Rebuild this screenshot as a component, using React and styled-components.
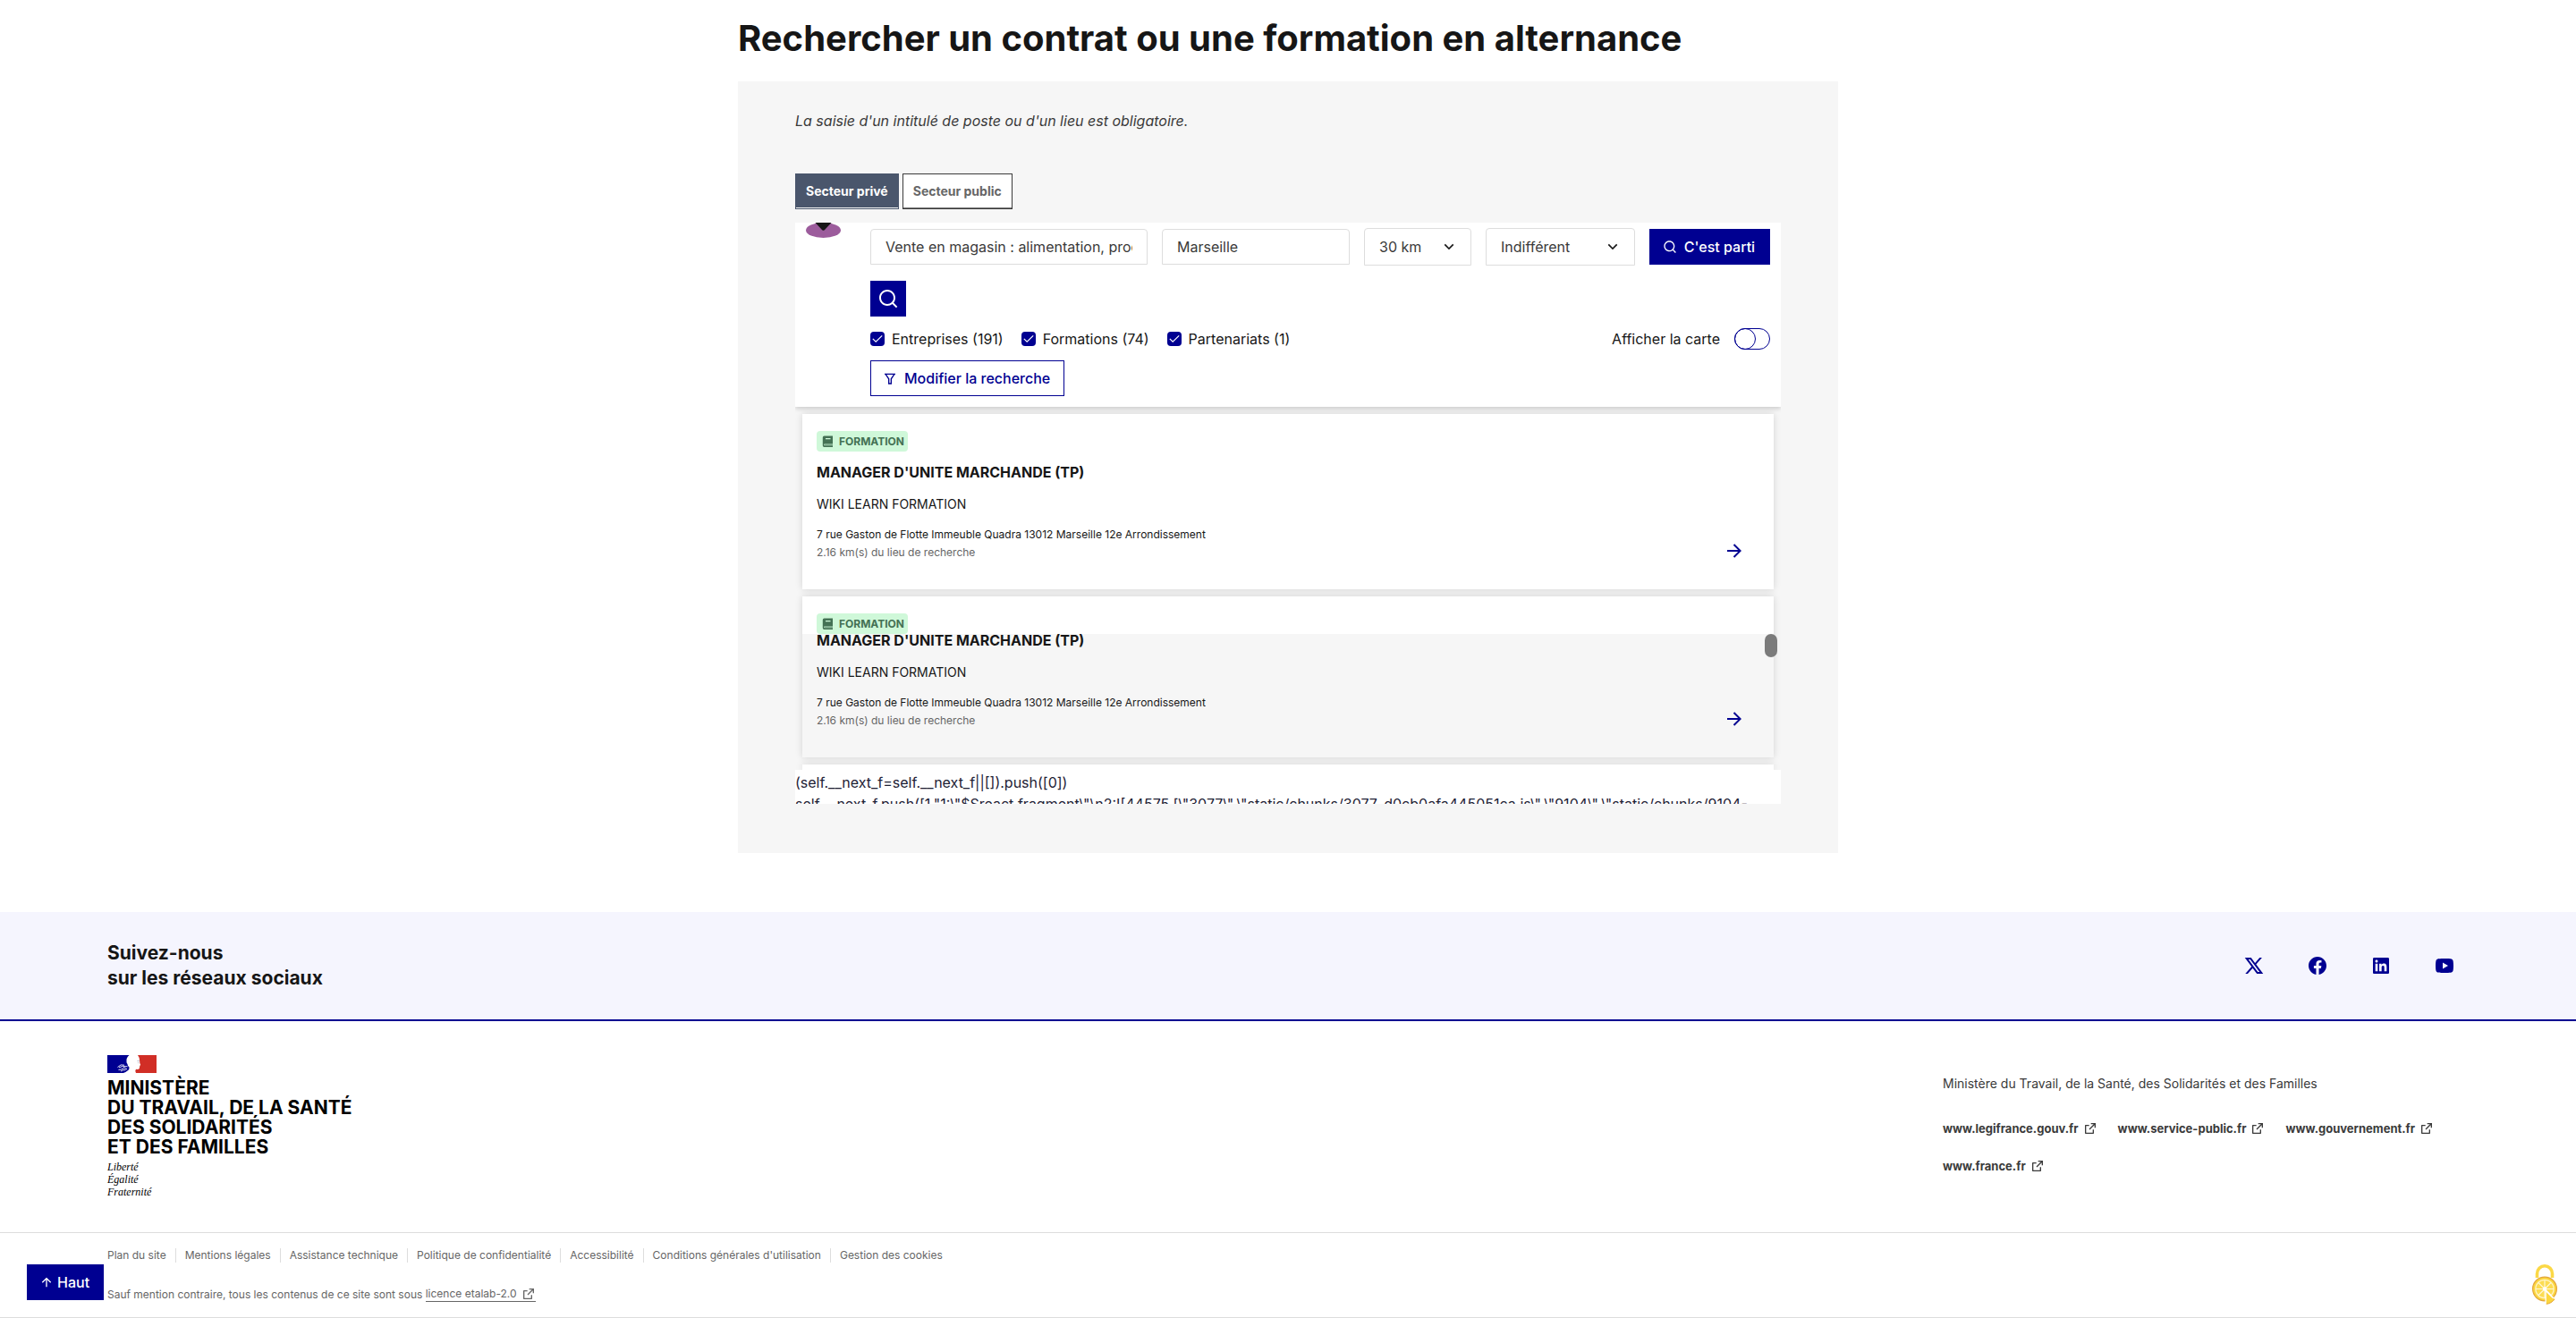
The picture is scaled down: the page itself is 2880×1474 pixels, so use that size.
import React from "react";
import styled, { createGlobalStyle, css } from "styled-components";
import {
  RiArrowDownSLine,
  RiArrowRightLine,
  RiArrowUpLine,
  RiExternalLinkLine,
  RiFacebookCircleFill,
  RiFilterLine,
  RiLinkedinBoxFill,
  RiSearchLine,
  RiTwitterXLine,
  RiYoutubeFill,
} from "react-icons/ri";

const color = {
  blue: "#000091",
  text: "#161616",
  body: "#3a3a3a",
  mention: "#666666",
  grey: "#f6f6f6",
  line: "#dddddd",
};

const GlobalStyle = createGlobalStyle`
  *, *::before, *::after { box-sizing: border-box; }
  body {
    margin: 0;
    background: #fff;
    color: ${color.text};
    font-family: Inter, "Open Sans", "Liberation Sans", sans-serif;
    font-size: 16px;
    line-height: 24px;
  }
  button, input, select { font: inherit; margin: 0; }
  h1, h2, h3, p, ul { margin: 0; padding: 0; }
  ul { list-style: none; }
  a { color: inherit; text-decoration: none; }
  svg { display: block; flex-shrink: 0; }
`;

/* ---------- search section ---------- */

const Main = styled.main`
  width: 100%;
  max-width: 1230px;
  margin: 0 auto 66px;
  padding-top: 19px;
`;

const Title = styled.h1`
  margin-bottom: 24px;
  font-size: 40px;
  line-height: 48px;
  font-weight: 700;
`;

const Panel = styled.section`
  padding: 32px 64px 55px;
  background: ${color.grey};
`;

const Hint = styled.p`
  font-style: italic;
  color: ${color.body};
`;

const Tabs = styled.div`
  display: flex;
  gap: 4px;
  margin: 47px 0 15px;
`;

const Tab = styled.button`
  height: 40px;
  padding: 0 11px;
  border: 1px solid ${(p) => (p.$active ? "#4a566c" : color.body)};
  background: ${(p) => (p.$active ? "#4a566c" : "#fff")};
  box-shadow: inset 0 -1px 0 ${(p) => (p.$active ? "#f6f6f6" : "#777")};
  color: ${(p) => (p.$active ? "#fff" : color.mention)};
  font-size: 14px;
  font-weight: 700;
`;

const Frame = styled.div`
  position: relative;
  overflow: hidden;
`;

const SearchHeader = styled.div`
  position: relative;
  z-index: 1;
  display: grid;
  grid-template-columns: 72px minmax(0, 1fr);
  padding: 0 12px 12px;
  background: #fff;
  box-shadow: 0 2px 5px rgba(0, 0, 0, 0.18);
`;

const HeaderContent = styled.div`
  display: flex;
  flex-direction: column;
  align-items: flex-start;
  padding-top: 6px;
`;

const Fields = styled.form`
  display: grid;
  grid-template-columns: 310fr 210fr 120fr 167fr 135px;
  gap: 16px;
  align-items: center;
  width: 100%;
  margin-bottom: 17px;
`;

const field = css`
  width: 100%;
  min-width: 0;
  border: 1px solid ${color.line};
  border-radius: 4px 4px 0 0;
  background: #fff;
  color: ${color.body};
  padding: 0 16px;
  outline: none;
`;

const TextInput = styled.input`
  ${field}
  height: 40px;
`;

const SelectBox = styled.div`
  position: relative;
  svg {
    position: absolute;
    top: 11px;
    right: 15px;
    pointer-events: none;
  }
`;

const Select = styled.select`
  ${field}
  height: 42px;
  appearance: none;
`;

const Button = styled.button`
  display: inline-flex;
  align-items: center;
  justify-content: center;
  gap: ${(p) => p.$gap || 8}px;
  height: 40px;
  padding: 0 15px 0 13px;
  border: 1px solid ${color.blue};
  background: ${(p) => (p.$outline ? "#fff" : color.blue)};
  color: ${(p) => (p.$outline ? color.blue : "#fff")};
  font-weight: 500;
  white-space: nowrap;
`;

const SquareButton = styled(Button)`
  width: 40px;
  padding: 0;
`;

const Filters = styled.div`
  display: flex;
  align-items: center;
  gap: 20px;
  width: 100%;
  margin: 13px 0 12px;
`;

const CheckLabel = styled.label`
  display: flex;
  align-items: center;
  gap: 8px;
`;

const CheckBox = styled.span`
  display: grid;
  width: 16px;
  height: 16px;
  > * { grid-area: 1 / 1; }
  svg { pointer-events: none; }
`;

const CheckInput = styled.input`
  appearance: none;
  width: 16px;
  height: 16px;
  border-radius: 4px;
  background: ${color.blue};
`;

const ToggleLabel = styled.label`
  display: flex;
  align-items: center;
  gap: 16px;
  margin-left: auto;
`;

const ToggleInput = styled.input`
  appearance: none;
  width: 40px;
  height: 24px;
  border: 1px solid ${color.blue};
  border-radius: 12px;
  background: #fff;
  &::before {
    content: "";
    display: block;
    width: 24px;
    height: 24px;
    margin: -1px;
    border: 1px solid ${color.blue};
    border-radius: 12px;
  }
`;

const Results = styled.div`
  display: flex;
  flex-direction: column;
  gap: 8px;
  padding: 8px 8px 0;
  overflow: hidden;
`;

const Card = styled.article`
  display: flex;
  align-items: flex-end;
  justify-content: space-between;
  padding: 19px 32px 31px 16px;
  background: ${(p) =>
    p.$split ? `linear-gradient(#fff 42px, ${color.grey} 42px)` : "#fff"};
  box-shadow: 0 0 8px rgba(0, 0, 0, 0.14);
  color: ${color.text};
  > svg { color: ${color.blue}; }
`;

const NextCard = styled.div`
  height: 6px;
  background: #fff;
  box-shadow: 0 0 8px rgba(0, 0, 0, 0.14);
`;

const Badge = styled.p`
  display: flex;
  align-items: center;
  gap: 5px;
  width: fit-content;
  height: 23px;
  padding: 0 4px 0 6px;
  border-radius: 4px;
  background: #cff8d9;
  color: #447154;
  font-size: 12px;
  font-weight: 700;
`;

const CardTitle = styled.h3`
  margin-top: ${(p) => (p.$split ? -5 : 11)}px;
  font-size: 16px;
  line-height: 24px;
  font-weight: 700;
`;

const Company = styled.p`
  margin: 12px 0;
  font-size: 14px;
`;

const Small = styled.p`
  font-size: 12px;
  line-height: 20px;
  color: ${(p) => (p.$muted ? color.mention : color.text)};
`;

const Thumb = styled.div`
  position: absolute;
  z-index: 2;
  top: 460px;
  right: 4px;
  width: 14px;
  height: 26px;
  border-radius: 7px;
  background: #7b7b7b;
`;

const ScriptText = styled.div`
  height: 38px;
  padding-top: 2px;
  overflow: hidden;
  background: #fff;
  color: #1e2235;
  white-space: pre;
`;

/* ---------- footer ---------- */

const Follow = styled.section`
  display: flex;
  align-items: center;
  justify-content: space-between;
  height: 122px;
  padding: 0 120px;
  border-bottom: 2px solid ${color.blue};
  background: #f5f5fe;
`;

const FollowTitle = styled.h2`
  font-size: 21px;
  line-height: 28px;
  font-weight: 700;
`;

const Social = styled.ul`
  display: flex;
  gap: 16px;
  color: ${color.blue};
  a {
    display: grid;
    place-items: center;
    width: 55px;
    height: 56px;
  }
`;

const FooterBody = styled.div`
  display: flex;
  justify-content: space-between;
  padding: 38px 120px;
`;

const Ministry = styled.p`
  margin: 6px 0 4px;
  color: #000;
  font-size: 21px;
  line-height: 22px;
  font-weight: 700;
`;

const Motto = styled.p`
  color: #000;
  font: italic 12px/14px "Liberation Serif", serif;
`;

const FooterAside = styled.div`
  width: 588px;
  padding-top: 20px;
  color: ${color.body};
  font-size: 14px;
`;

const SiteLinks = styled.ul`
  display: flex;
  flex-wrap: wrap;
  gap: 18px 23px;
  margin-top: 26px;
  font-size: 13px;
  font-weight: 700;
  a {
    display: flex;
    align-items: center;
    gap: 5px;
  }
`;

const FooterBottom = styled.div`
  padding: 15px 120px;
  border: solid ${color.line};
  border-width: 1px 0;
  color: ${color.mention};
  font-size: 12px;
  line-height: 20px;
`;

const LegalLinks = styled.ul`
  display: flex;
  align-items: center;
  margin-bottom: 24px;
  li {
    display: flex;
    align-items: center;
  }
  li + li::before {
    content: "";
    width: 1px;
    height: 16px;
    margin: 0 10px;
    background: ${color.line};
  }
`;

const Licence = styled.a`
  display: inline-flex;
  align-items: center;
  gap: 5px;
  height: 18px;
  border-bottom: 1px solid ${color.mention};
  vertical-align: top;
`;

const TopButton = styled(Button)`
  position: fixed;
  left: 30px;
  bottom: 20px;
`;

const CookieButton = styled.button`
  position: fixed;
  right: 21px;
  bottom: 15px;
  padding: 0;
  border: 0;
  background: none;
`;

/* ---------- drawings ---------- */

const PinBase = () => (
  <svg width="40" height="17" viewBox="0 0 40 17" aria-hidden="true">
    <ellipse cx="19.5" cy="8.5" rx="19.5" ry="8.5" fill="#9c5c9c" />
    <path d="M10.500 0H28.500L21.500 7.500Q19.500 10 17.500 7.500Z" fill="#161616" />
  </svg>
);

const BookIcon = () => (
  <svg width="14" height="14" viewBox="0 0 14 14" aria-hidden="true">
    <path
      fill="currentColor"
      fillRule="evenodd"
      d="M2.500 .5H12V9.500H2.800Q2 9.500 2 10.300T2.800 11.200H12V13H2.500Q.8 13 .8 11.300V2.200Q.8 .5 2.500 .5ZM4 3V4.200H9.500V3Z"
    />
    <path fill="currentColor" opacity=".55" d="M2.500 9.800H12V11H2.500Z" />
  </svg>
);

const CheckMark = () => (
  <svg width="16" height="16" viewBox="0 0 16 16" aria-hidden="true">
    <path d="M2.800 7.800 6.200 11.200 13.200 4.400" fill="none" stroke="#fff" strokeWidth="1.200" />
  </svg>
);

const Flag = () => (
  <svg width="55" height="20" viewBox="0 0 55 20" aria-hidden="true">
    <path fill="#000091" d="M0 0H24.500Q21 3 21.500 6.500Q21 8 22.500 10Q22.500 12 24.500 13.500Q25 16 22.500 17.500Q20.500 19 18 20H0Z" />
    <path fill="#d12e26" d="M34 0H55V20H32Q30.500 17.500 32 15.800Q35 16.200 35.800 15Q36 13.500 36.200 12.500Q36 11.800 37.200 11Q35.800 8.500 36.200 7Q36.500 3 34 0Z" />
    <path
      d="M11.500 13.500Q15 9.500 19 11.200M13 13.800Q17 11.500 22.500 12.800M12.500 16.500Q15.500 16.500 18.500 14.500M15 18Q18 16 20.500 16.500M18 13.500L22 15.800"
      fill="none"
      stroke="#fff"
      strokeWidth=".9"
    />
    <path d="M33.500 6.500H35.800M34 8.500L35 8.800" stroke="#9aa0b8" strokeWidth=".7" />
  </svg>
);

const CookieLock = () => (
  <svg width="28" height="45" viewBox="0 0 28 45" aria-hidden="true">
    <path d="M5.500 15V10.500A8.500 8.700 0 0 1 22.500 10.500V15" fill="none" stroke="#fbd846" strokeWidth="3.600" />
    <circle cx="14" cy="27.500" r="13.400" fill="#fbd63f" stroke="#e3a63c" strokeWidth="1.200" />
    <circle cx="14" cy="27.500" r="10.200" fill="#fcdc52" stroke="#fff3c4" strokeWidth="1.200" />
    <path
      d="M14 17.500V37.500M4 27.500H24M7 20.500L21 34.500M21 20.500L7 34.500"
      stroke="#fff7d6"
      strokeWidth="1.200"
    />
    <path d="M14.500 27.500V42.500H16L24.500 37.500Z" fill="#fff" />
    <path d="M15.800 31L22.500 37.800L25.500 38.800Q21.500 44 15.800 44.500Z" fill="#fbd63f" />
    <path d="M25 39Q21.500 43.800 15.800 44.300" fill="none" stroke="#e3a63c" strokeWidth="1" />
    <circle cx="14.200" cy="27.500" r="2.200" fill="#fff" />
  </svg>
);

/* ---------- page ---------- */

const filters = ["Entreprises (191)", "Formations (74)", "Partenariats (1)"];

const socials = [
  ["Twitter", RiTwitterXLine],
  ["Facebook", RiFacebookCircleFill],
  ["LinkedIn", RiLinkedinBoxFill],
  ["YouTube", RiYoutubeFill],
];

const sites = [
  "www.legifrance.gouv.fr",
  "www.service-public.fr",
  "www.gouvernement.fr",
  "www.france.fr",
];

const legal = [
  "Plan du site",
  "Mentions légales",
  "Assistance technique",
  "Politique de confidentialité",
  "Accessibilité",
  "Conditions générales d'utilisation",
  "Gestion des cookies",
];

const scriptText = String.raw`(self.__next_f=self.__next_f||[]).push([0])
self.__next_f.push([1,"1:\"$Sreact.fragment\"\n2:I[44575,[\"3077\",\"static/chunks/3077-d0cb0afa445051ca.js\",\"9104\",\"static/chunks/9104-`;

const ResultCard = ({ split }) => (
  <Card $split={split}>
    <div>
      <Badge>
        <BookIcon />
        FORMATION
      </Badge>
      <CardTitle $split={split}>MANAGER D'UNITE MARCHANDE (TP)</CardTitle>
      <Company>WIKI LEARN FORMATION</Company>
      <Small>7 rue Gaston de Flotte Immeuble Quadra 13012 Marseille 12e Arrondissement</Small>
      <Small $muted>2.16 km(s) du lieu de recherche</Small>
    </div>
    <RiArrowRightLine size={24} />
  </Card>
);

export default function App() {
  return (
    <>
      <GlobalStyle />
      <Main>
        <Title>Rechercher un contrat ou une formation en alternance</Title>
        <Panel>
          <Hint>La saisie d'un intitulé de poste ou d'un lieu est obligatoire.</Hint>
          <Tabs role="tablist">
            <Tab type="button" role="tab" aria-selected="true" $active>Secteur privé</Tab>
            <Tab type="button" role="tab" aria-selected="false">Secteur public</Tab>
          </Tabs>
          <Frame>
            <SearchHeader>
              <PinBase />
              <HeaderContent>
                <Fields onSubmit={(e) => e.preventDefault()}>
                  <TextInput aria-label="Métier" defaultValue="Vente en magasin : alimentation, produits" />
                  <TextInput aria-label="Lieu" defaultValue="Marseille" />
                  <SelectBox>
                    <Select aria-label="Rayon"><option>30 km</option></Select>
                    <RiArrowDownSLine size={20} />
                  </SelectBox>
                  <SelectBox>
                    <Select aria-label="Niveau"><option>Indifférent</option></Select>
                    <RiArrowDownSLine size={20} />
                  </SelectBox>
                  <Button type="submit">
                    <RiSearchLine size={16} />
                    C'est parti
                  </Button>
                </Fields>
                <SquareButton type="button" aria-label="Rechercher">
                  <RiSearchLine size={24} />
                </SquareButton>
                <Filters>
                  {filters.map((label) => (
                    <CheckLabel key={label}>
                      <CheckBox>
                        <CheckInput type="checkbox" defaultChecked />
                        <CheckMark />
                      </CheckBox>
                      {label}
                    </CheckLabel>
                  ))}
                  <ToggleLabel>
                    Afficher la carte
                    <ToggleInput type="checkbox" role="switch" />
                  </ToggleLabel>
                </Filters>
                <Button type="button" $outline>
                  <RiFilterLine size={16} />
                  Modifier la recherche
                </Button>
              </HeaderContent>
            </SearchHeader>
            <Results>
              <ResultCard />
              <ResultCard split />
              <NextCard />
            </Results>
            <ScriptText>{scriptText}</ScriptText>
            <Thumb />
          </Frame>
        </Panel>
      </Main>

      <Follow>
        <FollowTitle>
          Suivez-nous
          <br />
          sur les réseaux sociaux
        </FollowTitle>
        <Social>
          {socials.map(([name, Icon]) => (
            <li key={name}>
              <a href="#" aria-label={name}><Icon size={24} /></a>
            </li>
          ))}
        </Social>
      </Follow>

      <footer>
        <FooterBody>
          <div>
            <Flag />
            <Ministry>
              MINISTÈRE
              <br />
              DU TRAVAIL, DE LA SANTÉ
              <br />
              DES SOLIDARITÉS
              <br />
              ET DES FAMILLES
            </Ministry>
            <Motto>
              Liberté
              <br />
              Égalité
              <br />
              Fraternité
            </Motto>
          </div>
          <FooterAside>
            <p>Ministère du Travail, de la Santé, des Solidarités et des Familles</p>
            <SiteLinks>
              {sites.map((site) => (
                <li key={site}>
                  <a href="#">
                    {site}
                    <RiExternalLinkLine size={16} />
                  </a>
                </li>
              ))}
            </SiteLinks>
          </FooterAside>
        </FooterBody>
        <FooterBottom>
          <LegalLinks>
            {legal.map((label) => (
              <li key={label}><a href="#">{label}</a></li>
            ))}
          </LegalLinks>
          <p>
            Sauf mention contraire, tous les contenus de ce site sont sous{" "}
            <Licence href="#">
              licence etalab-2.0
              <RiExternalLinkLine size={16} />
            </Licence>
          </p>
        </FooterBottom>
      </footer>

      <TopButton type="button" $gap={4}>
        <RiArrowUpLine size={16} />
        Haut
      </TopButton>
      <CookieButton type="button" aria-label="Cookies">
        <CookieLock />
      </CookieButton>
    </>
  );
}
